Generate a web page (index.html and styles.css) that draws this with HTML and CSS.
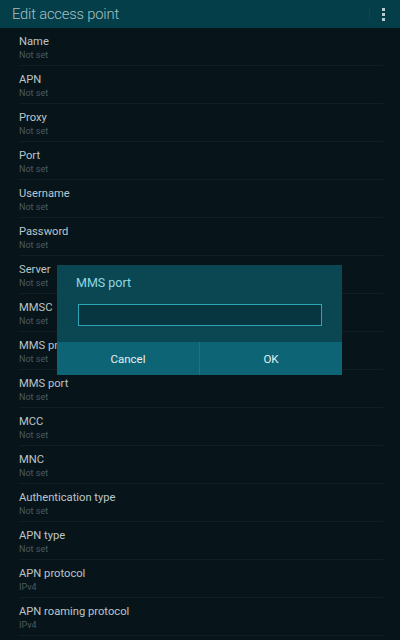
FILE: index.html
```html
<!DOCTYPE html>
<html lang="en-US">
  <head>
    <title>Edit access point</title>
    <meta charset="utf-8" />
    <link rel="stylesheet" href="styles.css">
  </head>
  <body>
    <div class="header">
      <h1 class="title">Edit access point</h1>
      <div class="menu"><span></span><span></span><span></span></div>
    </div>
    <div class="list">
      <div class="row"><div class="label">Name</div><div class="value">Not set</div></div>
      <div class="row"><div class="label">APN</div><div class="value">Not set</div></div>
      <div class="row"><div class="label">Proxy</div><div class="value">Not set</div></div>
      <div class="row"><div class="label">Port</div><div class="value">Not set</div></div>
      <div class="row"><div class="label">Username</div><div class="value">Not set</div></div>
      <div class="row"><div class="label">Password</div><div class="value">Not set</div></div>
      <div class="row"><div class="label">Server</div><div class="value">Not set</div></div>
      <div class="row"><div class="label">MMSC</div><div class="value">Not set</div></div>
      <div class="row"><div class="label">MMS proxy</div><div class="value">Not set</div></div>
      <div class="row"><div class="label">MMS port</div><div class="value">Not set</div></div>
      <div class="row"><div class="label">MCC</div><div class="value">Not set</div></div>
      <div class="row"><div class="label">MNC</div><div class="value">Not set</div></div>
      <div class="row"><div class="label">Authentication type</div><div class="value">Not set</div></div>
      <div class="row"><div class="label">APN type</div><div class="value">Not set</div></div>
      <div class="row"><div class="label">APN protocol</div><div class="value">IPv4</div></div>
      <div class="row"><div class="label">APN roaming protocol</div><div class="value">IPv4</div></div>
    </div>
    <div class="dialog">
      <div class="dialogBody">
        <h2 class="dialogTitle">MMS port</h2>
        <input type="text" class="dialogInput" />
      </div>
      <div class="dialogButtons">
        <button class="dialogButton">Cancel</button>
        <button class="dialogButton">OK</button>
      </div>
    </div>
  </body>
</html>
```

FILE: styles.css
```css
* {
  margin: 0;
  padding: 0;
  box-sizing: border-box;
}

body {
  background-color: #07151b;
  font-family: Roboto, "Liberation Sans", sans-serif;
  width: 400px;
  height: 640px;
  overflow: hidden;
}

.header {
  height: 28px;
  background-color: #033e49;
  display: flex;
  align-items: center;
  justify-content: space-between;
  padding: 0 12px 0 12px;
}

.title {
  font-size: 14.8px;
  font-weight: 300;
  color: #a6c0c5;
  letter-spacing: -0.2px;
}

.menu {
  display: flex;
  flex-direction: column;
  gap: 2px;
  padding-right: 3px;
  padding-left: 12px;
  border-left: 1px solid #0a4652;
}

.menu span {
  width: 3px;
  height: 3px;
  background-color: #b8cbcf;
  display: block;
}

.list {
  padding: 0 17px 0 19px;
}

.row {
  height: 38px;
  padding-top: 7px;
  border-bottom: 1px solid #0f1f25;
}

.label {
  font-size: 11.2px;
  color: #bcc5c8;
  line-height: 14px;
}

.value {
  font-size: 9px;
  color: #4b5a5f;
  line-height: 12px;
}

.dialog {
  position: absolute;
  top: 265px;
  left: 57px;
  width: 285px;
  height: 110px;
  background-color: #0a4753;
  display: flex;
  flex-direction: column;
}

.dialogBody {
  flex: 1;
  padding: 11px 20px 0 19px;
}

.dialogTitle {
  font-size: 12.5px;
  font-weight: 400;
  color: #8fd8e4;
  line-height: 14px;
  margin-bottom: 14px;
}

.dialogInput {
  width: 244px;
  height: 22px;
  margin-left: 2px;
  background-color: #073641;
  border: 1px solid #2ea4b7;
  outline: none;
}

.dialogButtons {
  height: 33px;
  display: flex;
  background-color: #0c6475;
}

.dialogButton {
  flex: 1;
  background: none;
  border: none;
  color: #e6eef0;
  font-family: Roboto, "Liberation Sans", sans-serif;
  font-size: 11.5px;
}

.dialogButton + .dialogButton {
  border-left: 1px solid #1a7585;
}
```
